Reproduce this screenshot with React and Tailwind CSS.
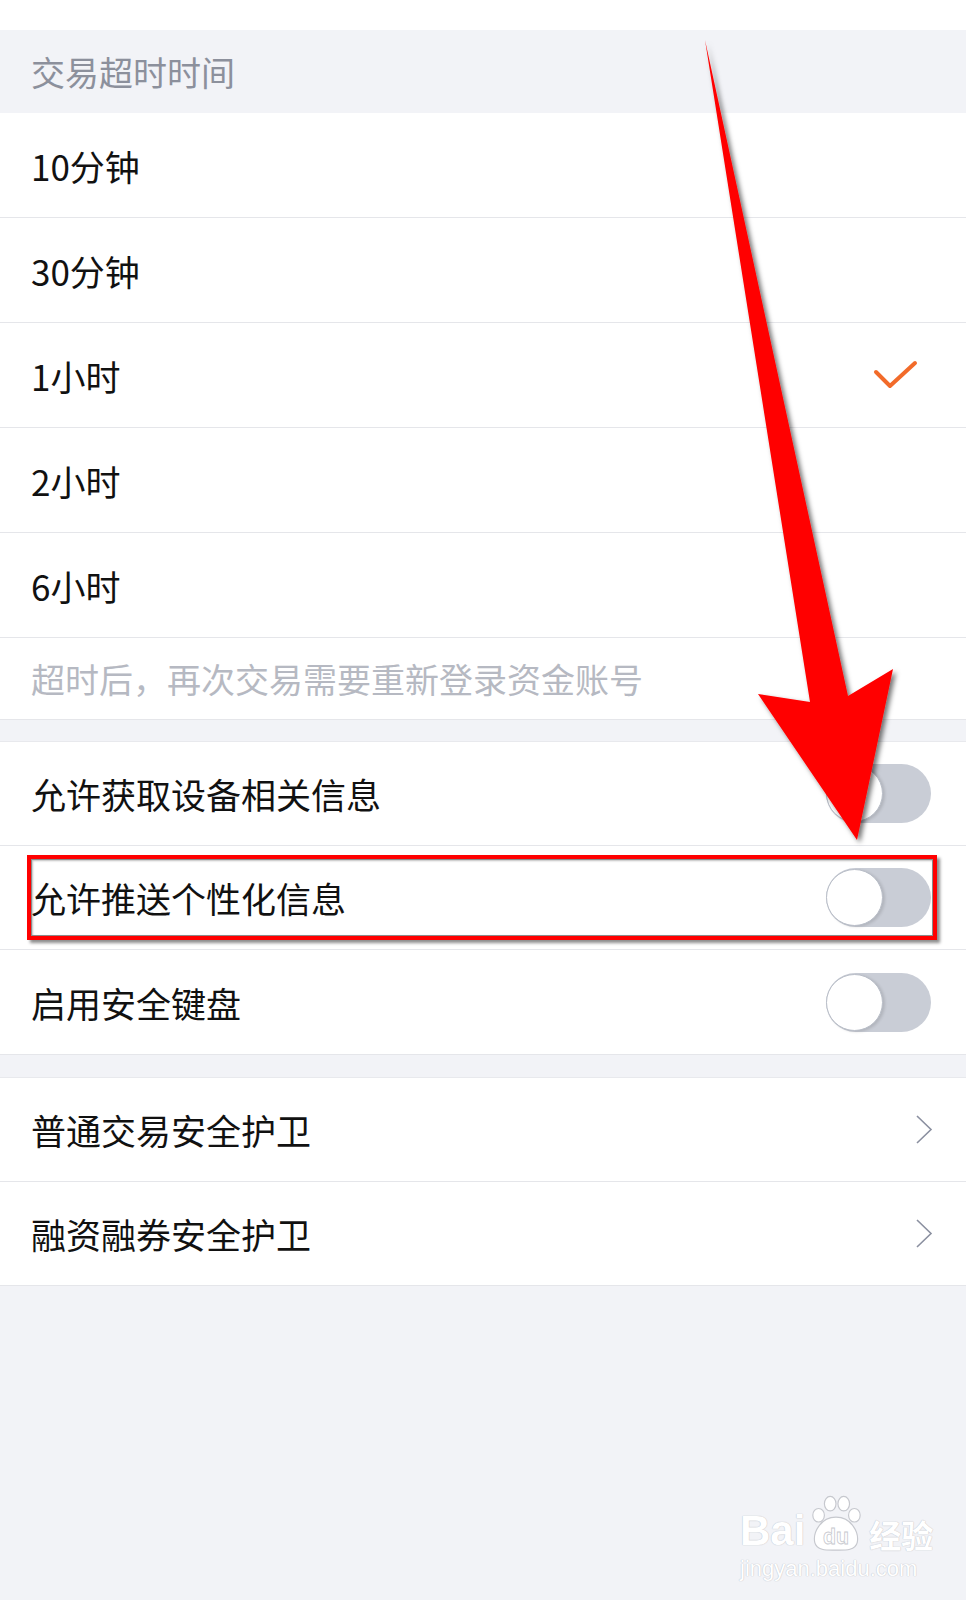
const FONT = { fontFamily: '"Noto Sans CJK SC", "Noto Sans", sans-serif' }

function Check() {
  return (
    <svg width="46" height="30" viewBox="0 0 46 30" fill="none">
      <polyline
        points="3,12 17,26 42,3"
        stroke="#f26b2a"
        strokeWidth="4"
        strokeLinecap="round"
        strokeLinejoin="round"
      />
    </svg>
  )
}

function Chevron() {
  return (
    <svg width="17" height="29" viewBox="0 0 17 29" fill="none">
      <polyline points="1,1 15,14.5 1,28" stroke="#8b90a0" strokeWidth="1.6" />
    </svg>
  )
}

function Toggle() {
  return (
    <div className="relative w-[105px] h-[59px] rounded-full bg-[#c9cdd6]">
      <div className="absolute left-0 top-[1px] w-[57px] h-[57px] rounded-full bg-white border-[1.5px] border-[#b9bec8] shadow-[2px_1px_3px_rgba(0,0,0,0.12)]" />
    </div>
  )
}

function Row({ label, right, pr = 'pr-[35px]', h = 'h-[105px]', last }) {
  return (
    <div
      className={`flex items-center justify-between ${h} pl-[31px] ${pr} bg-white ${last ? '' : 'border-b border-[#e5e6ea]'}`}
    >
      <span className="text-[35px] leading-none text-[#111111]">{label}</span>
      {right}
    </div>
  )
}

function Watermark() {
  const outline = { textShadow: '0 0 1px #c3c5cc, 0 0 1px #c3c5cc' }
  return (
    <div className="absolute left-[740px] top-[1494px] flex flex-col items-start pointer-events-none">
      <div className="flex items-end h-[58px]">
        <span className="text-[42px] font-bold leading-none text-white" style={{ ...outline, fontFamily: '"Liberation Sans", sans-serif' }}>
          Bai
        </span>
        <svg width="62" height="58" viewBox="0 0 64 60">
          <g fill="#ffffff" stroke="#c6c8ce" strokeWidth="1.2">
            <ellipse cx="14" cy="22" rx="6" ry="7" />
            <ellipse cx="26" cy="10" rx="6" ry="7.5" />
            <ellipse cx="40" cy="10" rx="6" ry="7.5" />
            <ellipse cx="51" cy="22" rx="6" ry="7" />
            <path d="M32 24 C16 24 8 40 10 50 C12 59 24 58 32 58 C40 58 52 59 54 50 C56 40 48 24 32 24 Z" />
          </g>
          <text x="32" y="52" textAnchor="middle" fontSize="22" fontWeight="700" fill="#ffffff" stroke="#c6c8ce" strokeWidth="0.8" fontFamily="Liberation Sans, sans-serif">
            du
          </text>
        </svg>
        <span className="text-[32px] font-bold leading-[36px] text-white ml-[2px]" style={{ ...outline, ...FONT }}>
          经验
        </span>
      </div>
      <span className="text-[22px] leading-none mt-[6px] text-white" style={{ ...outline, fontFamily: '"Liberation Sans", sans-serif' }}>
        jingyan.baidu.com
      </span>
    </div>
  )
}

export default function App() {
  const times = ['10分钟', '30分钟', '1小时', '2小时', '6小时']

  return (
    <div className="relative w-[966px] min-h-[1600px] bg-[#f2f3f7] overflow-hidden" style={FONT}>
      <div className="h-[30px] bg-white" />

      {/* header */}
      <div className="h-[83px] flex items-center pl-[31px]">
        <span className="text-[34px] leading-none text-[#8c909c]">交易超时时间</span>
      </div>

      {/* timeout options */}
      <div className="bg-white">
        {times.map((t) => (
          <Row
            key={t}
            label={t}
            pr="pr-[47px]"
            right={t === '1小时' ? <Check /> : null}
          />
        ))}
        <div className="h-[82px] flex items-center pl-[31px] border-b border-[#e5e6ea]">
          <span className="text-[34px] leading-none text-[#b6b9c2]">超时后，再次交易需要重新登录资金账号</span>
        </div>
      </div>

      <div className="h-[21px]" />

      {/* switches */}
      <div className="bg-white border-t border-[#e8e9ed]">
        <Row label="允许获取设备相关信息" h="h-[104px]" right={<Toggle />} />
        <Row label="允许推送个性化信息" h="h-[104px]" right={<Toggle />} />
        <Row label="启用安全键盘" h="h-[105px]" right={<Toggle />} />
      </div>

      <div className="h-[22px]" />

      {/* links */}
      <div className="bg-white border-t border-[#e8e9ed]">
        <Row label="普通交易安全护卫" h="h-[104px]" pr="pr-[33px]" right={<Chevron />} />
        <Row label="融资融券安全护卫" h="h-[104px]" pr="pr-[33px]" right={<Chevron />} />
      </div>

      {/* highlight box */}
      <div className="absolute left-[27px] top-[855px] w-[910px] h-[85px] border-[4px] border-[#ff0000] shadow-[3px_3px_3px_rgba(0,0,0,0.45)] pointer-events-none">
        <div className="w-full h-full border border-[#8a8a8a] shadow-[inset_1px_1px_2px_rgba(0,0,0,0.25)]" />
      </div>

      {/* arrow */}
      <svg className="absolute left-0 top-0 pointer-events-none" width="966" height="1600" viewBox="0 0 966 1600">
        <defs>
          <filter id="sh" x="-20%" y="-5%" width="140%" height="110%">
            <feDropShadow dx="3" dy="3" stdDeviation="2.5" floodColor="#000" floodOpacity="0.55" />
          </filter>
        </defs>
        <polygon
          points="705,40 848,696 893,669 857,840 758,694 810,702"
          fill="#ff0000"
          filter="url(#sh)"
        />
      </svg>

      <Watermark />
    </div>
  )
}
